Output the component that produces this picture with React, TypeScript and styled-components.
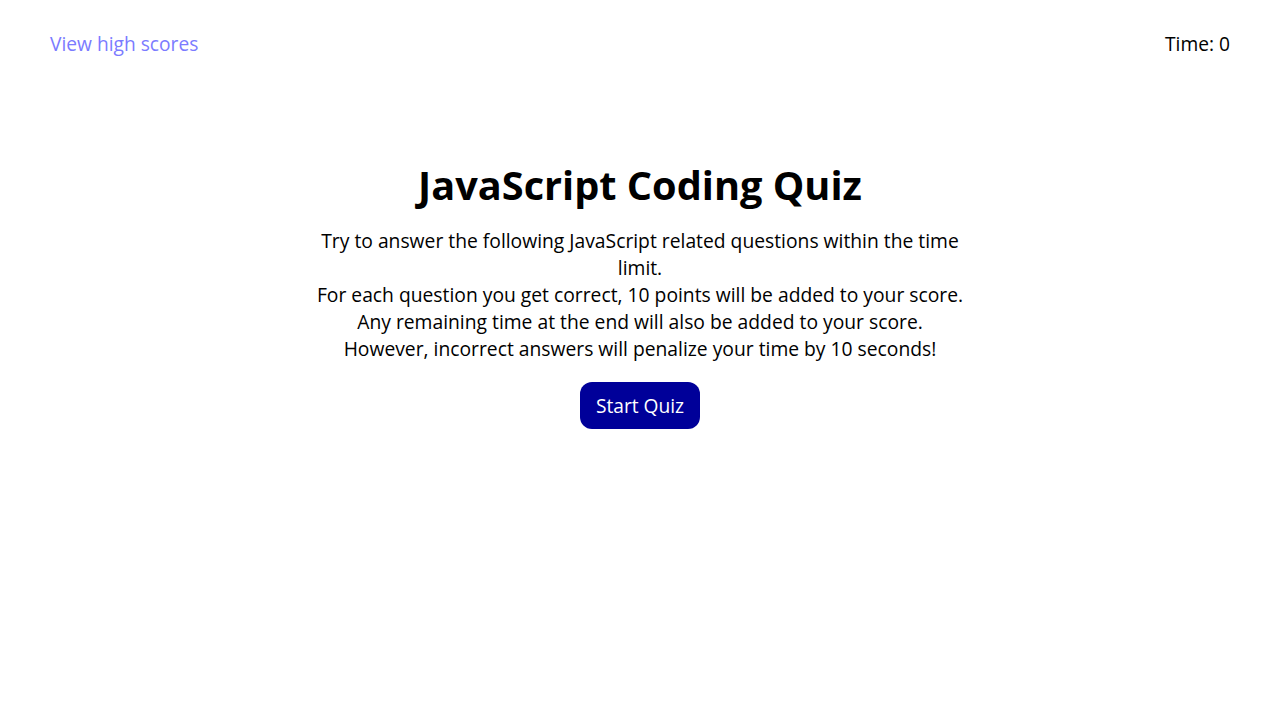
import React from "react";
import styled, { createGlobalStyle } from "styled-components";

const GlobalStyle = createGlobalStyle`
  html, body {
    margin: 0;
    padding: 0;
    background: #ffffff;
    font-family: "Open Sans", "Noto Sans", sans-serif;
    color: #000000;
  }
`;

const Header = styled.header`
  display: flex;
  justify-content: space-between;
  align-items: center;
  padding: 30px 50px;
  font-size: 19.2px;
  line-height: 27px;
`;

const HighScores = styled.a`
  color: #7b7bff;
  text-decoration: none;
  cursor: pointer;
`;

const Timer = styled.div`
  color: #000000;
`;

const Main = styled.main`
  display: flex;
  flex-direction: column;
  align-items: center;
  text-align: center;
  padding-top: 71px;
`;

const Title = styled.h1`
  margin: 0 0 15px;
  font-size: 39.7px;
  line-height: 54px;
  font-weight: 700;
`;

const Intro = styled.p`
  margin: 0;
  max-width: 660px;
  font-size: 19.3px;
  line-height: 27px;
`;

const StartButton = styled.button`
  margin-top: 20px;
  background: #000099;
  color: #ffffff;
  border: none;
  border-radius: 12px;
  font-family: "Open Sans", "Noto Sans", sans-serif;
  font-size: 19.2px;
  line-height: 27px;
  height: 47px;
  padding: 10px 15.5px;
  cursor: pointer;
`;

export default function App() {
  return (
    <>
      <GlobalStyle />
      <Header>
        <HighScores>View high scores</HighScores>
        <Timer>Time: 0</Timer>
      </Header>
      <Main>
        <Title>JavaScript Coding Quiz</Title>
        <Intro>
          Try to answer the following JavaScript related questions within the time limit.
          <br />
          For each question you get correct, 10 points will be added to your score.
          <br />
          Any remaining time at the end will also be added to your score.
          <br />
          However, incorrect answers will penalize your time by 10 seconds!
        </Intro>
        <StartButton>Start Quiz</StartButton>
      </Main>
    </>
  );
}
